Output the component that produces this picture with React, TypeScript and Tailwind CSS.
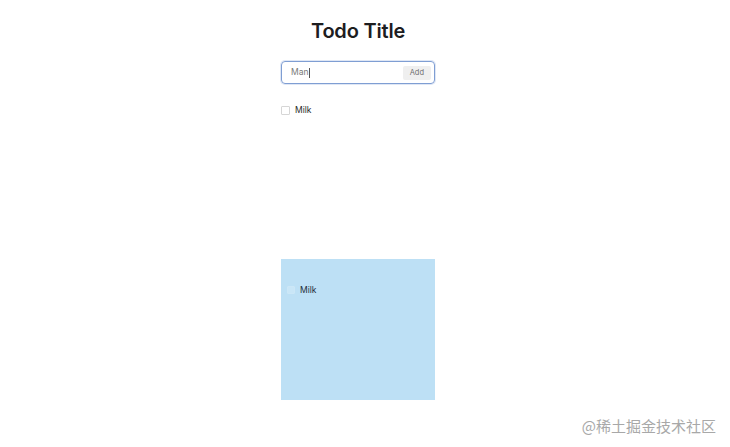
import React, { useState } from 'react';

export default function App() {
  const [text] = useState('Man');
  const [todos] = useState([{ id: 1, title: 'Milk', done: false }]);

  return (
    <div className="relative w-[730px] h-[447px] bg-white overflow-hidden font-[Inter,sans-serif]">
      <div className="flex flex-col w-[154px] ml-[281px] pt-[19px]">
        <h1 className="text-center text-[20px] leading-[24px] font-semibold text-[#1d1d1f] tracking-[-0.2px]">
          Todo Title
        </h1>

        <div className="mt-[18px] flex items-center h-[23px] rounded-[4px] border border-[#7f9ed3] pl-[9px] pr-[3px] shadow-[0_0_0_1px_#dfe7f5]">
          <div className="flex-1 flex items-center text-[8.5px] text-[#7a7a7a]">
            {text}
            <span className="ml-[1px] w-[1px] h-[10px] bg-[#555]" />
          </div>
          <button className="h-[14px] px-[7px] rounded-[2px] bg-[#efefef] text-[7.5px] text-[#6f6f6f]">
            Add
          </button>
        </div>

        <ul className="mt-[20px] flex flex-col">
          {todos.map(todo => (
            <li key={todo.id} className="flex items-center gap-[5px] h-[12px]">
              <span className="w-[9px] h-[9px] border border-[#d6d6d6] rounded-[1px] bg-white" />
              <span className="text-[8.5px] text-[#2a2a2a]">{todo.title}</span>
            </li>
          ))}
        </ul>

        <div className="mt-[143px] h-[141px] bg-[#bde0f5] pt-[25px] pl-[6px]">
          {todos.map(todo => (
            <div key={todo.id} className="flex items-center gap-[5px] h-[12px]">
              <span className="w-[8px] h-[8px] rounded-[1px] bg-[#c9e6f7] border border-[#cce7f7]" />
              <span className="text-[8.5px] text-[#1f2d3a]">{todo.title}</span>
            </div>
          ))}
        </div>
      </div>

      <div className="absolute right-[14px] bottom-[12px] text-[15px] leading-[18px] text-[#a8a8a8] font-['Noto_Sans_CJK_SC',sans-serif]">
        @稀土掘金技术社区
      </div>
    </div>
  );
}
